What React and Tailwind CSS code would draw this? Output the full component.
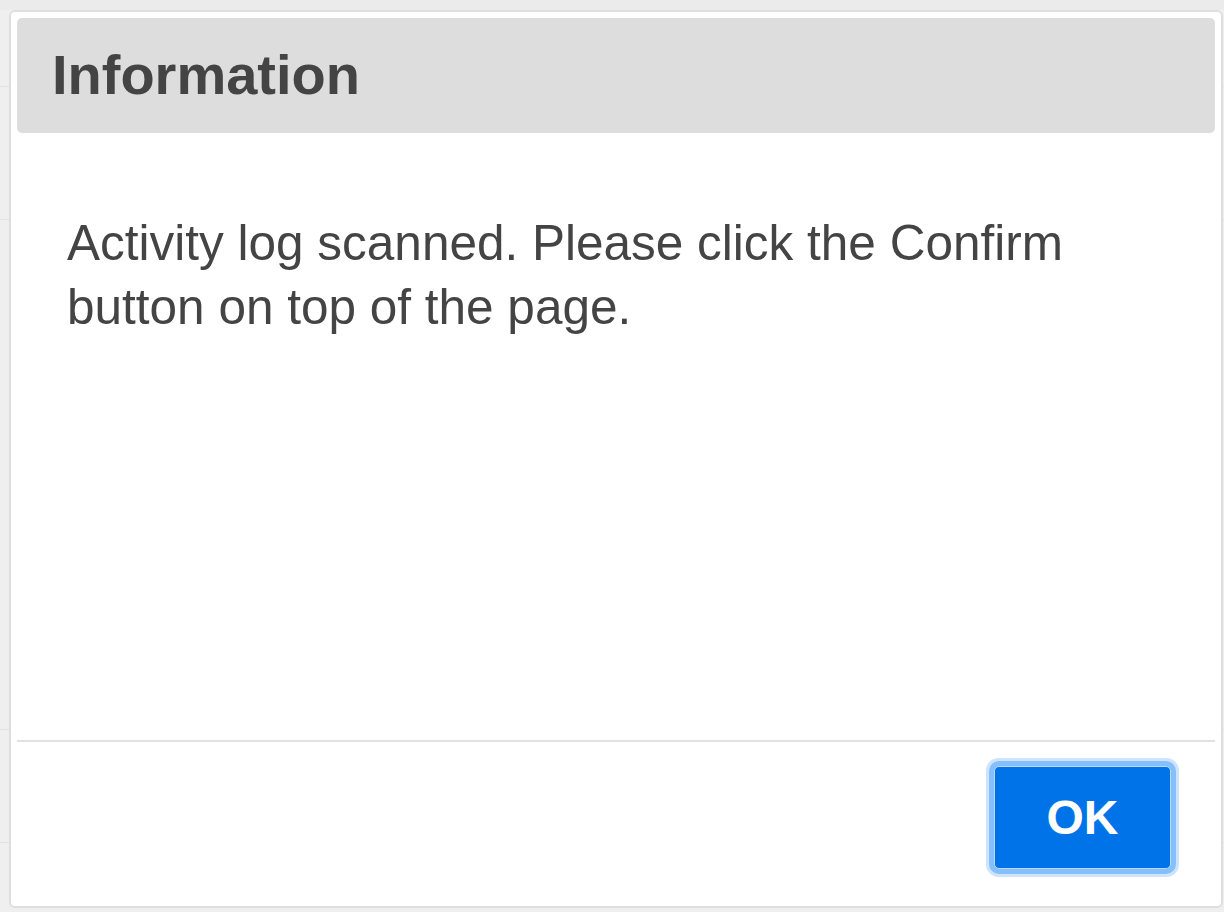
import React from 'react'

function BackdropPage() {
  return (
        <div className="h-[912px] bg-[#efefef] flex flex-col">
            <div className="h-[10px] bg-[#ebebeb]"></div>
            <div className="h-[77px] border-b border-[#e2e2e2]"></div>
            <div className="h-[133px] border-b border-[#e2e2e2]"></div>
            <div className="h-[510px] border-b border-[#e2e2e2]"></div>
            <div className="h-[113px] border-b border-[#e2e2e2]"></div>
            <div className="flex-1"></div>
        </div>
  )
}

function InfoDialog() {
  return (
        <div className="absolute left-[9px] top-[10px] w-[1214px] h-[898px] bg-white border-2 border-[#dedede] rounded-[6px] p-[6px] flex flex-col font-['Liberation_Sans',Arial,sans-serif]">
            <div className="h-[115px] bg-[#dddddd] rounded-[5px] flex items-center pl-[35px]">
                <h1 className="text-[56px] font-bold text-[#444444] leading-none pb-[2px]">
                Information
                </h1>
            </div>
            <div className="flex-1 pl-[50px] pr-[40px] pt-[78px]">
                <p className="text-[49.5px] leading-[64px] text-[#444444] max-w-[1030px]">
                Activity log scanned. Please click the Confirm button on top of the page.
                </p>
            </div>
            <div className="h-[160px] border-t-2 border-[#e2e2e2] flex justify-end items-start pt-[24px] pr-[44px]">
                <button className="w-[177px] h-[103px] bg-[#0073e8] border border-[#b9d9fb] rounded-[5px] text-white text-[48px] font-bold leading-none shadow-[0_0_0_5px_#85bffc,0_0_0_8px_#cde4fd]">
                OK
                </button>
            </div>
        </div>
  )
}

export default function App() {
  return (
        <div className="relative w-[1224px] h-[912px] overflow-hidden">
            <BackdropPage />
            <InfoDialog />
        </div>
  )
}
